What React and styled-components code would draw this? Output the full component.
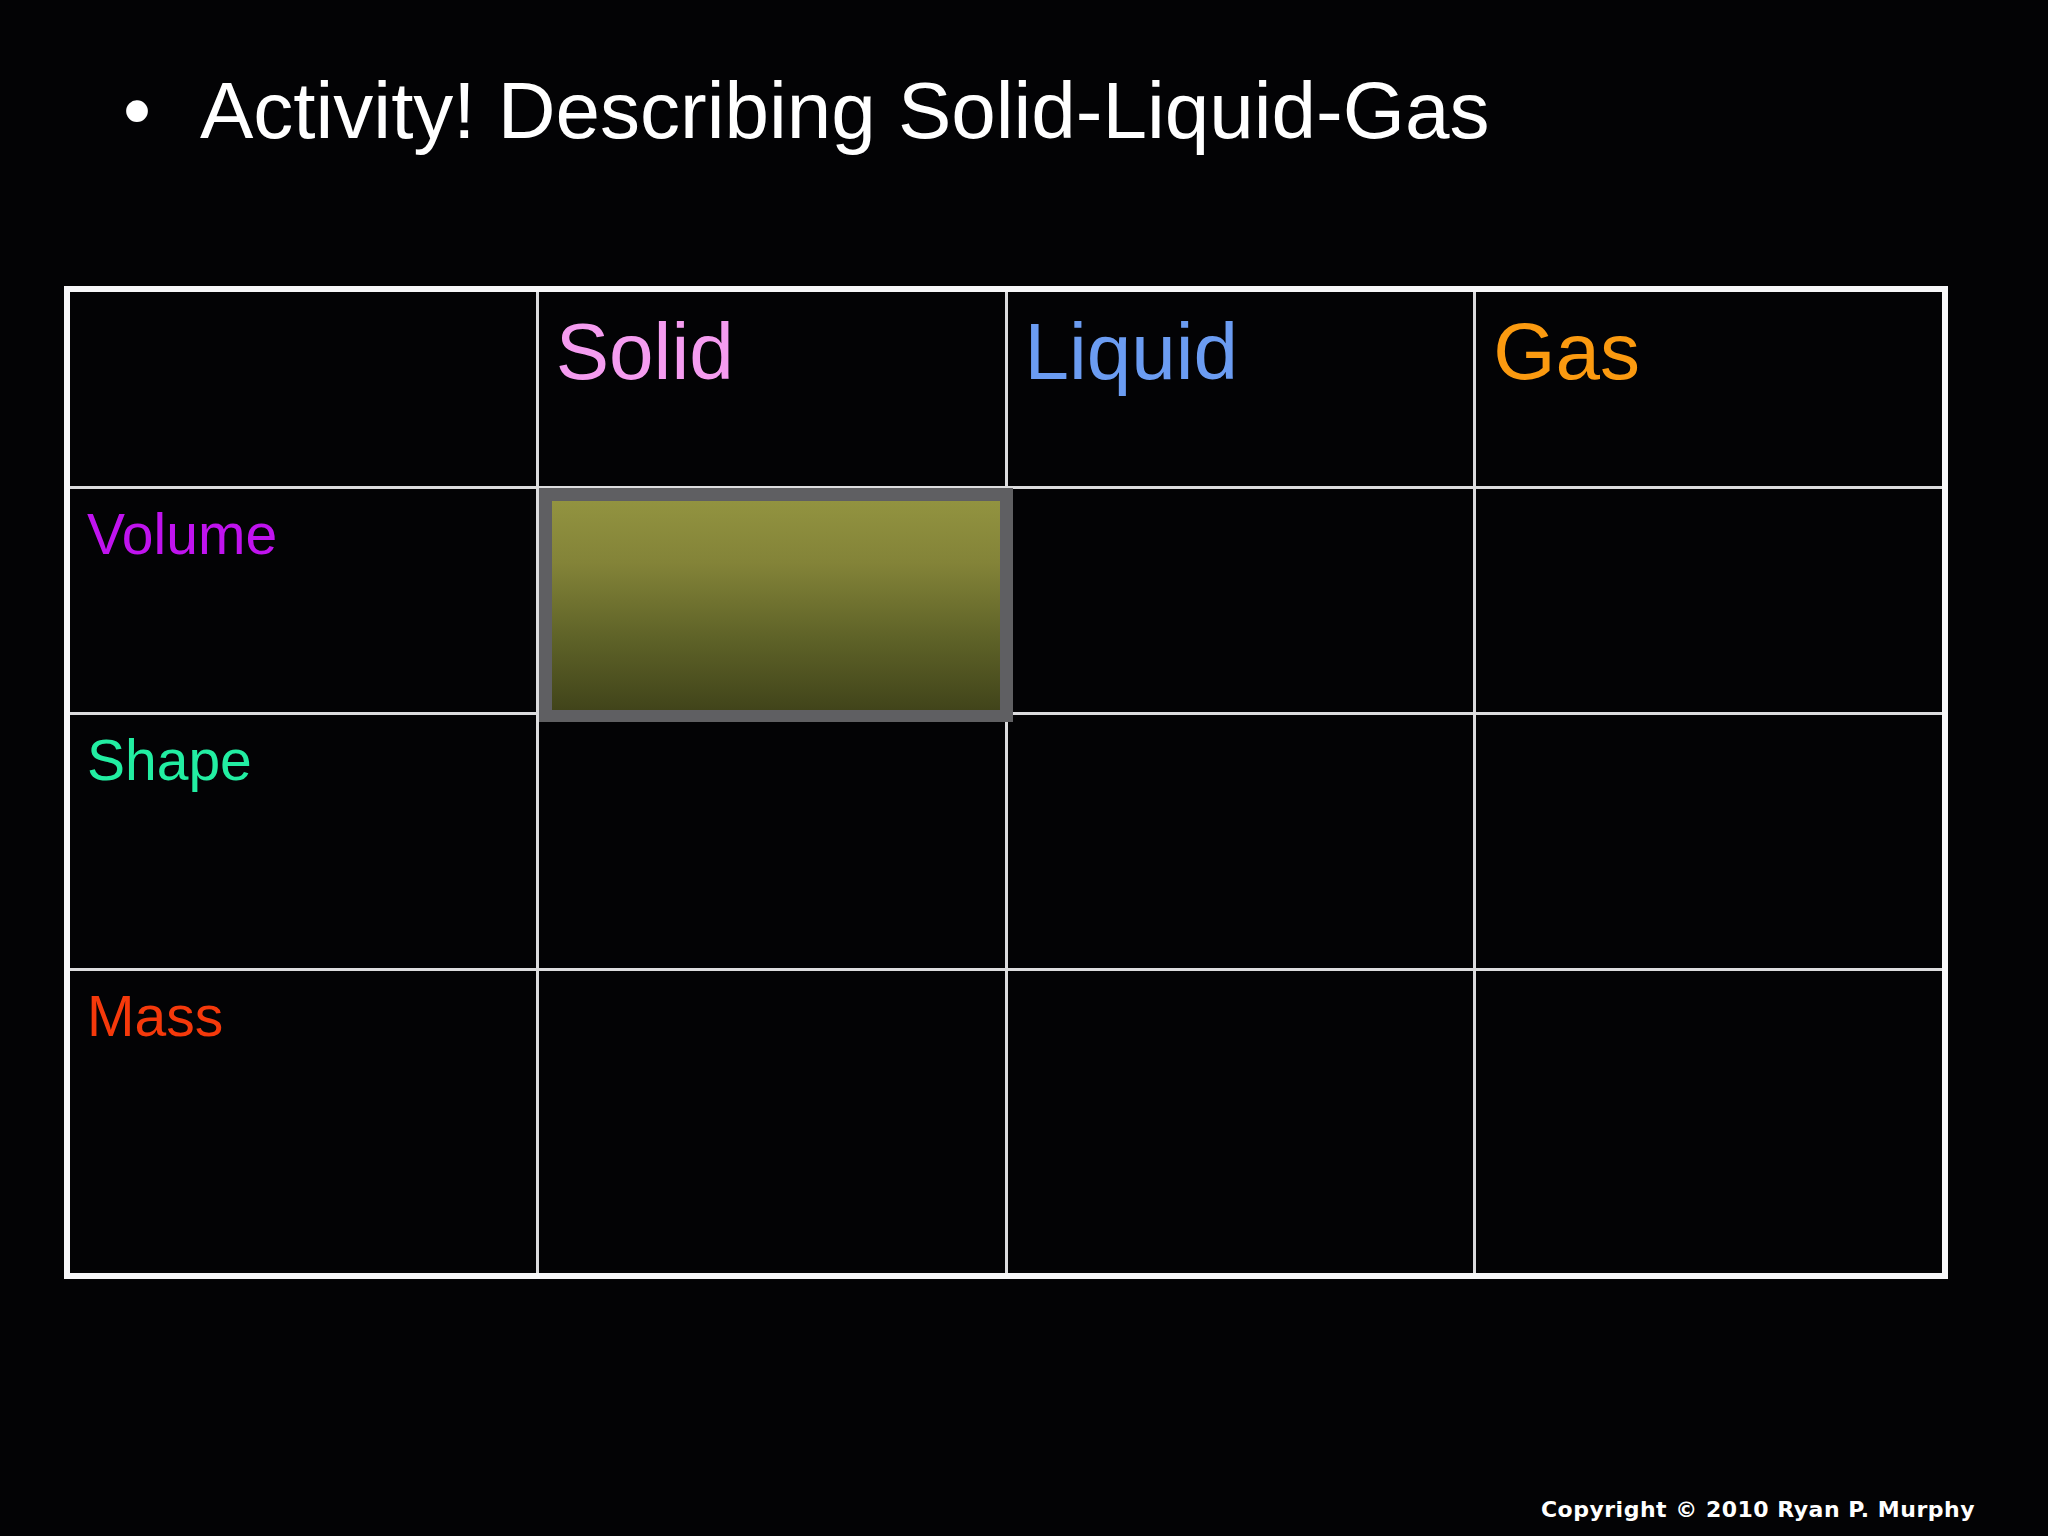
import styled, { createGlobalStyle } from "styled-components";

const GlobalStyle = createGlobalStyle`
  html, body {
    margin: 0;
    padding: 0;
    background: #030305;
  }
  body {
    font-family: "Liberation Sans", Arial, sans-serif;
  }
`;

const Slide = styled.div`
  display: flex;
  flex-direction: column;
  width: 2048px;
  height: 1536px;
  background: #030305;
  color: #fff;
  box-sizing: border-box;
  overflow: hidden;
`;

const Title = styled.h1`
  display: flex;
  align-items: baseline;
  margin: 65px 0 0 0;
  padding-left: 123px;
  font-size: 80px;
  font-weight: 400;
  line-height: 92px;
  color: #fff;
`;

const Bullet = styled.span`
  display: inline-block;
  width: 77px;
`;

const Grid = styled.div`
  display: grid;
  grid-template-columns: repeat(4, 1fr);
  grid-template-rows: 194px 223px 253px 302px;
  gap: 3px;
  width: 1884px;
  margin: 129px 0 0 64px;
  box-sizing: border-box;
  border: 6px solid #f7f7f9;
  background: #dcdcde;
`;

const Cell = styled.div`
  position: relative;
  background: #030305;
  padding: ${(props) => (props.head ? "14px 17px" : "12px 17px")};
  font-size: ${(props) => (props.head ? "80px" : "57px")};
  color: ${(props) => props.color || "#fff"};
  line-height: normal;
`;

const Highlight = styled.div`
  position: absolute;
  left: 0;
  top: -1px;
  width: 474px;
  height: 234px;
  box-sizing: border-box;
  border: 13px solid #5f5f62;
  border-bottom-width: 12px;
  background: linear-gradient(to bottom, #929340 0%, #838338 30%, #5f6328 65%, #41441a 100%);
  z-index: 2;
`;

const Footer = styled.div`
  margin-top: auto;
  padding: 0 73px 14px 0;
  text-align: right;
  font-family: "DejaVu Sans", Verdana, sans-serif;
  font-weight: 700;
  font-size: 22px;
  letter-spacing: 0.5px;
  color: #fff;
`;

const headers = [
  { label: "", color: "#fff" },
  { label: "Solid", color: "#f59cf0" },
  { label: "Liquid", color: "#6b9cf2" },
  { label: "Gas", color: "#fb9a10" },
];

const rows = [
  { label: "Volume", color: "#c013ef" },
  { label: "Shape", color: "#22eea2" },
  { label: "Mass", color: "#f5390b" },
];

const App = () => {
  return (
    <>
      <GlobalStyle />
      <Slide>
        <Title>
          <Bullet>•</Bullet>
          Activity! Describing Solid-Liquid-Gas
        </Title>
        <Grid>
          {headers.map((h, i) => (
            <Cell head key={"h" + i} color={h.color}>
              {h.label}
            </Cell>
          ))}
          {rows.map((r, ri) => [
            <Cell key={r.label} color={r.color}>
              {r.label}
            </Cell>,
            ...[0, 1, 2].map((c) => (
              <Cell key={r.label + c}>
                {ri === 0 && c === 0 && <Highlight />}
              </Cell>
            )),
          ])}
        </Grid>
        <Footer>Copyright © 2010 Ryan P. Murphy</Footer>
      </Slide>
    </>
  );
};

export default App;
